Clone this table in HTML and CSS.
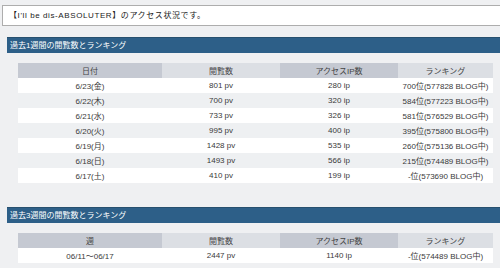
FILE: index.html
```html
<!DOCTYPE html>
<html lang="ja">
<head>
<meta charset="utf-8">
<link rel="stylesheet" href="styles.css">
</head>
<body>
<div class="intro">【I'll be dis-ABSOLUTER】のアクセス状況です。</div>

<div class="section-title">過去1週間の閲覧数とランキング</div>
<table class="stats">
  <colgroup><col class="c1"><col class="c2"><col class="c3"><col class="c4"></colgroup>
  <thead>
    <tr><th class="dark">日付</th><th class="light">閲覧数</th><th class="dark">アクセスIP数</th><th class="light">ランキング</th></tr>
  </thead>
  <tbody>
    <tr><td>6/23(金)</td><td>801 pv</td><td>280 ip</td><td>700位(577828 BLOG中)</td></tr>
    <tr><td>6/22(木)</td><td>700 pv</td><td>320 ip</td><td>584位(577223 BLOG中)</td></tr>
    <tr><td>6/21(水)</td><td>733 pv</td><td>326 ip</td><td>581位(576529 BLOG中)</td></tr>
    <tr><td>6/20(火)</td><td>995 pv</td><td>400 ip</td><td>395位(575800 BLOG中)</td></tr>
    <tr><td>6/19(月)</td><td>1428 pv</td><td>535 ip</td><td>260位(575136 BLOG中)</td></tr>
    <tr><td>6/18(日)</td><td>1493 pv</td><td>566 ip</td><td>215位(574489 BLOG中)</td></tr>
    <tr><td>6/17(土)</td><td>410 pv</td><td>199 ip</td><td>-位(573690 BLOG中)</td></tr>
  </tbody>
</table>

<div class="section-title second">過去3週間の閲覧数とランキング</div>
<table class="stats">
  <colgroup><col class="c1"><col class="c2"><col class="c3"><col class="c4"></colgroup>
  <thead>
    <tr><th class="dark">週</th><th class="light">閲覧数</th><th class="dark">アクセスIP数</th><th class="light">ランキング</th></tr>
  </thead>
  <tbody>
    <tr><td>06/11〜06/17</td><td>2447 pv</td><td>1140 ip</td><td>-位(574489 BLOG中)</td></tr>
  </tbody>
</table>
</body>
</html>
```
FILE: styles.css
```css
html, body {
  margin: 0;
  padding: 0;
}
body {
  background: #eff0f2;
  font-family: "Liberation Sans", "Noto Sans CJK JP", sans-serif;
  font-size: 8px;
  color: #333;
  overflow: hidden;
  width: 500px;
}
.intro {
  margin: 5px -10px 0 2px;
  height: 19px;
  line-height: 19px;
  background: #fff;
  border: 1px solid #adadad;
  padding-left: 6px;
  color: #222;
  letter-spacing: 0.6px;
}
.section-title {
  margin: 11px 0 0 7px;
  height: 16px;
  line-height: 16px;
  background: #2d5f88;
  border-top: 1px solid #27506f;
  box-sizing: border-box;
  color: #fff;
  padding-left: 3px;
  font-size: 8px;
}
.section-title.second {
  margin-top: 24px;
}
.stats {
  margin: 10px 0 0 18px;
  width: 475px;
  border-collapse: collapse;
  table-layout: fixed;
}
.c1 { width: 144px; }
.c2 { width: 118px; }
.c3 { width: 118px; }
.c4 { width: 95px; }
.stats th {
  height: 15px;
  padding: 0;
  font-weight: normal;
  color: #444;
  text-align: center;
}
.stats th.dark { background: #c5c9d2; }
.stats th.light { background: #dcdfe4; }
.stats td {
  height: 15px;
  padding: 0;
  text-align: center;
  white-space: nowrap;
  color: #3a3a3a;
}
.stats tbody tr:nth-child(odd) td { background: #fff; }
.stats tbody tr:nth-child(even) td { background: #eef0f2; }
```
